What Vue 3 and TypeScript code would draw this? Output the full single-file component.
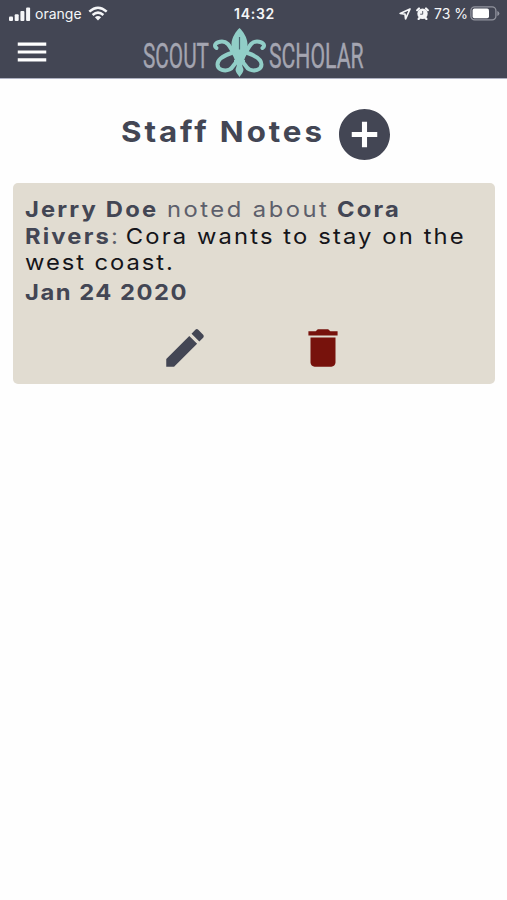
<script setup lang="ts">
import { ref } from 'vue'

interface Note {
  id: number
  author: string
  subject: [string, string]
  body: [string, string]
  date: string
}

const notes = ref<Note[]>([
  {
    id: 1,
    author: 'Jerry Doe',
    subject: ['Cora', 'Rivers'],
    body: ['Cora wants to stay on the', 'west coast.'],
    date: 'Jan 24 2020',
  },
])

function removeNote(id: number) {
  notes.value = notes.value.filter((n) => n.id !== id)
}
</script>

<template>
  <div class="screen">
    <header class="top">
      <div class="status">
        <div class="side">
          <svg class="signal" viewBox="0 0 22 14" width="22" height="14" fill="#f5f6f8">
            <rect x="0" y="9.5" width="4" height="4.5" rx="1" />
            <rect x="5.7" y="7.2" width="4" height="6.8" rx="1" />
            <rect x="11.4" y="4" width="4" height="10" rx="1" />
            <rect x="17.1" y="0.5" width="4" height="13.5" rx="1" />
          </svg>
          <span class="carrier">orange</span>
          <svg class="wifi" viewBox="0 0 20 15" width="20" height="15" fill="none" stroke="#f5f6f8" stroke-width="2.5">
            <path d="M1.3 5.6Q10-2.2 18.7 5.6" />
            <path d="M4.6 9Q10 4.2 15.4 9" />
            <path d="M10 14.4L6.9 11.3Q10 8.8 13.1 11.3Z" fill="#f5f6f8" stroke="none" />
          </svg>
        </div>
        <span class="clock">14:32</span>
        <div class="side right">
          <svg class="arrow" viewBox="0 0 12 12" width="12" height="12" fill="none" stroke="#f5f6f8" stroke-width="1.7" stroke-linejoin="round">
            <path d="M11 1L1.200 5.500L6 6.100L6.600 10.800Z" />
          </svg>
          <svg class="alarm" viewBox="0 0 13 13" width="13" height="13">
            <circle cx="6.5" cy="6.8" r="5.200" fill="#f5f6f8" />
            <path d="M1.200 3.200L3 1.500M11.800 3.200L10 1.500M2.600 11.900L3.400 11M10.400 11.900L9.600 11" stroke="#f5f6f8" stroke-width="2.200" stroke-linecap="round" />
            <path d="M6.700 4V7.200H4.200" stroke="#5c5f6c" stroke-width="1" fill="none" />
          </svg>
          <span class="percent">73 %</span>
          <svg class="battery" viewBox="0 0 30 15" width="30" height="15">
            <rect x=".9" y=".9" width="25" height="13" rx="3.8" fill="none" stroke="#92949e" stroke-width="1.3" />
            <rect x="2.6" y="2.6" width="16.4" height="9.6" rx="1.8" fill="#fff" />
            <path d="M27.3 5Q29.4 5.6 29.4 7.4T27.3 10Z" fill="#92949e" />
          </svg>
        </div>
      </div>
      <div class="bar">
        <button class="menu" aria-label="Menu">
          <svg viewBox="0 0 24 24" width="38" height="38" fill="#fff">
            <path d="M3 18h18v-2H3v2zm0-5h18v-2H3v2zm0-7v2h18V6H3z" />
          </svg>
        </button>
        <svg class="logo" viewBox="0 0 228 52" width="228" height="52">
          <g class="wordmark">
            <text x="0" y="42" textLength="66" lengthAdjust="spacingAndGlyphs">SCOUT</text>
            <text x="126" y="42" textLength="94.500" lengthAdjust="spacingAndGlyphs">SCHOLAR</text>
          </g>
          <g fill="none" stroke="#91cec7" stroke-width="4" stroke-linecap="round" stroke-linejoin="round">
            <path d="M73.500 22C69.500 19 74 15.500 79 15.500C85 15.500 87 21 90 26C92 29 93 31 94 34" />
            <path d="M88.500 27C81 29.500 74.500 33 74.500 38.500C74.500 44 82 45.500 86.500 43.500C91 41.500 90.500 36.500 95 35.500" />
            <path d="M119.500 22C123.500 19 119 15.500 114 15.500C108 15.500 106 21 103 26C101 29 100 31 99 34" />
            <path d="M104.500 27C112 29.500 118.500 33 118.500 38.500C118.500 44 111 45.500 106.500 43.500C102 41.500 102.500 36.500 98 35.500" />
          </g>
          <path d="M96.500 2C100 5 104.500 12 104.500 18C104.500 24 100 28 99.500 34H102V37.500H99.500C98.500 40 100.500 42 100.500 44C100 47 98 48.500 96.500 51C95 48.500 93 47 92.500 44C92.500 42 94.500 40 93.500 37.500H91V34H93.500C93 28 88.500 24 88.500 18C88.500 12 93 5 96.500 2Z" fill="#91cec7" />
          <path d="M96.500 11V23.500" stroke="#466670" stroke-width="1.200" />
        </svg>
      </div>
    </header>

    <main>
      <div class="heading">
        <h1>Staff Notes</h1>
        <button class="add" aria-label="Add note">
          <svg viewBox="2 2 20 20" width="51" height="51" fill="#434654">
            <path d="M12 2C6.480 2 2 6.480 2 12s4.480 10 10 10 10-4.480 10-10S17.520 2 12 2zm5 11h-4v4h-2v-4H7v-2h4V7h2v4h4v2z" />
          </svg>
        </button>
      </div>

      <article v-for="note in notes" :key="note.id" class="card">
        <p class="line"><b>{{ note.author }}</b> <span class="verb">noted about</span> <b class="first">{{ note.subject[0] }}</b></p>
        <p class="line"><b>{{ note.subject[1] }}</b><span class="soft">:</span> <span class="text">{{ note.body[0] }}</span></p>
        <p class="line last">{{ note.body[1] }}</p>
        <p class="line date"><b>{{ note.date }}</b></p>
        <div class="actions">
          <button aria-label="Edit">
            <svg viewBox="0 0 24 24" width="50" height="50" fill="#434654">
              <path d="M3 17.250V21h3.750L17.810 9.940l-3.750-3.750L3 17.250zM20.710 7.040c.39-.39.39-1.020 0-1.410l-2.340-2.340a.996.996 0 0 0-1.410 0l-1.830 1.830 3.750 3.750 1.830-1.830z" />
            </svg>
          </button>
          <button aria-label="Delete" @click="removeNote(note.id)">
            <svg viewBox="0 0 24 24" width="50" height="50" fill="#77120c">
              <path d="M6 19c0 1.100.9 2 2 2h8c1.100 0 2-.9 2-2V7H6v12zM19 4h-3.500l-1-1h-5l-1 1H5v2h14V4z" />
            </svg>
          </button>
        </div>
      </article>
    </main>
  </div>
</template>

<style>
body {
  margin: 0;
  background: #fefefe;
}
</style>

<style scoped>
.screen {
  min-height: 900px;
  font-family: "Inter", "Open Sans", sans-serif;
  color: #434654;
}
button {
  display: block;
  padding: 0;
  border: 0;
  background: none;
}
svg {
  display: block;
}
.top {
  box-sizing: border-box;
  height: 79px;
  background: #434654;
  border-bottom: 1px solid #aeb1c1;
}
.status {
  display: grid;
  grid-template-columns: 1fr auto 1fr;
  align-items: center;
  height: 26px;
  padding: 0 7px 0 9px;
  color: #f5f6f8;
  font-size: 14px;
  line-height: 26px;
}
.side {
  display: flex;
  align-items: center;
}
.right {
  justify-content: flex-end;
}
.carrier {
  margin: 0 6px 0 4px;
}
.wifi {
  margin-bottom: 1px;
}
.clock {
  font-weight: 600;
  letter-spacing: 0.7px;
  padding-top: 1px;
}
.arrow {
  margin-top: 1px;
}
.alarm {
  margin: 0 5px 0 5px;
}
.percent {
  margin-right: 2px;
}
.bar {
  display: flex;
  height: 52px;
  padding-left: 12.500px;
}
.menu {
  padding-top: 7px;
  height: 45px;
}
.logo {
  margin-left: 92.500px;
  overflow: visible;
}
.wordmark {
  font-family: Roboto, sans-serif;
  font-weight: 400;
  font-size: 34.500px;
  fill: #a4a5b1;
  stroke: #a4a5b1;
  stroke-width: 0.4px;
}
.heading {
  display: flex;
  align-items: center;
  height: 51px;
  padding: 30px 0 23px 121px;
}
h1 {
  width: 218px;
  margin: 0;
  padding-bottom: 6px;
  font-size: 29px;
  line-height: 36px;
  font-weight: 700;
  letter-spacing: 2.700px;
  white-space: nowrap;
  transform: scaleX(1.08);
  transform-origin: left;
}
.card {
  box-sizing: border-box;
  height: 201px;
  margin: 0 12px 0 13px;
  padding: 13px 12px 0;
  border-radius: 5px;
  background: #e1dcd1;
}
.line {
  margin: 0;
  color: #15151a;
  font-size: 22px;
  line-height: 26.600px;
  letter-spacing: 2px;
  white-space: nowrap;
  transform: scaleX(1.08);
  transform-origin: left;
}
.line b {
  color: #434654;
  font-weight: 700;
}
.verb {
  color: #5d5f6b;
  letter-spacing: 2.300px;
}
.first {
  margin-left: -1px;
}
.soft {
  color: #5d5f6b;
}
.text {
  margin-left: -2.800px;
  letter-spacing: 1.970px;
}
.last {
  letter-spacing: 1.800px;
}
.date {
  margin-top: 3px;
  letter-spacing: 1.400px;
}
.actions {
  display: flex;
  gap: 88px;
  padding: 18px 0 0 135px;
}
</style>
